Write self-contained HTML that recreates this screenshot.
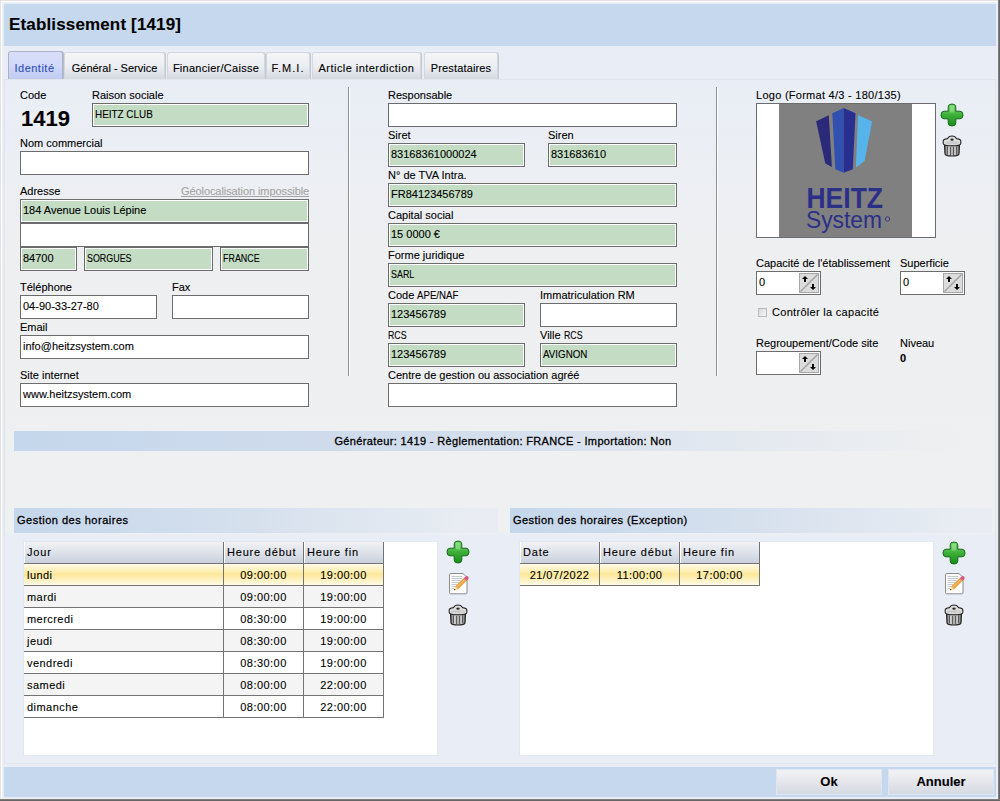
<!DOCTYPE html>
<html><head><meta charset="utf-8">
<style>
*{margin:0;padding:0;box-sizing:border-box}
html,body{width:1000px;height:801px;overflow:hidden}
body{background:#e9eef6;font-family:"Liberation Sans",sans-serif;font-size:11px;color:#000;position:relative;-webkit-text-stroke:0.1px currentColor}
.a{position:absolute}
.l{position:absolute;font-size:11px;line-height:13px;white-space:nowrap}
.in{position:absolute;height:24px;border:1px solid #6c6c6c;background:#fff;box-shadow:inset 0 0 0 1px #fff;padding-left:2px;line-height:21px;white-space:nowrap;overflow:hidden}
.g{background:#c3dcc3}
.tab{position:absolute;top:52px;height:27px;border:1px solid #d3d7df;border-bottom:none;border-radius:3px 3px 0 0;background:linear-gradient(#f5f5f7 0%,#eceef2 50%,#d5d9e1 100%);text-align:center;line-height:31px;white-space:nowrap;box-shadow:1px 0 0 #c4c8d0}
.th{position:absolute;top:542px;height:22px;border-right:1px solid #737373;border-bottom:1px solid #737373;background:linear-gradient(#f1f2f5,#cad1dd);box-shadow:inset 1px 0 0 #fff;padding-left:3px;line-height:21px;white-space:nowrap;letter-spacing:0.8px}
.td{position:absolute;height:22px;border-right:1px solid #737373;border-bottom:1px solid #737373;line-height:23px;padding:0 3px;white-space:nowrap;letter-spacing:0.45px}
.sel{background:linear-gradient(#fffbea,#fce89a 50%,#fffae6)}
.gr{background:#f4f4f4}
.wh{background:#fff}
</style></head><body>
<!-- frame -->
<div class="a" style="left:0;top:0;width:1000px;height:1px;background:#e4e1e2"></div>
<div class="a" style="left:0;top:0;width:1px;height:801px;background:#e4e1e2"></div>
<div class="a" style="left:1px;top:1px;width:997px;height:1px;background:#fff"></div>
<div class="a" style="left:1px;top:1px;width:1px;height:798px;background:#fff"></div>
<div class="a" style="left:998px;top:0;width:2px;height:801px;background:linear-gradient(90deg,#8a8a8a,#5a5a5a)"></div>
<div class="a" style="left:0;top:799px;width:1000px;height:2px;background:linear-gradient(#8a8a8a,#5a5a5a)"></div>
<!-- header -->
<div class="a" style="left:4px;top:4px;width:992px;height:42px;background:#c6d8ee"></div>
<div class="l" style="left:9px;top:15px;font-size:17px;line-height:20px;font-weight:bold;letter-spacing:0.15px">Etablissement [1419]</div>

<!-- tabs -->
<div class="tab" style="left:64px;width:101px">Général - Service</div>
<div class="tab" style="left:167px;width:98px;letter-spacing:0.27px">Financier/Caisse</div>
<div class="tab" style="left:266px;width:44px;letter-spacing:1px">F.M.I.</div>
<div class="tab" style="left:312px;width:109px;letter-spacing:0.45px">Article interdiction</div>
<div class="tab" style="left:424px;width:74px;letter-spacing:0.15px">Prestataires</div>
<!-- panel -->
<div class="a" style="left:4px;top:79px;width:992px;height:685px;background:linear-gradient(#e9eef6 0px,#eeeff1 171px,#eff0f1 450px,#e9eef6 456px);border:1px solid #e0e5ec"></div>
<div class="tab" style="left:8px;top:51px;width:55px;height:28px;border-color:#aab2c8;background:linear-gradient(#dadefb,#d2d8f8 50%,#bfcbf0);color:#2d4fb5;line-height:33px;letter-spacing:0.5px;padding-right:2px;box-shadow:1px 0 0 #b8bcc8">Identité</div>

<!-- BODY -->
<!-- left column -->
<div class="l" style="left:20px;top:89px">Code</div>
<div class="l" style="left:92px;top:89px">Raison sociale</div>
<div class="l" style="left:21px;top:107px;font-size:22px;line-height:24px;font-weight:bold">1419</div>
<div class="in g" style="left:92px;top:103px;width:217px"><span style="display:inline-block;transform:scaleX(0.9);transform-origin:0 50%">HEITZ CLUB</span></div>
<div class="l" style="left:20px;top:137px">Nom commercial</div>
<div class="in" style="left:20px;top:151px;width:289px"></div>
<div class="l" style="left:20px;top:185px">Adresse</div>
<div class="l" style="left:181px;top:185px;color:#a3a3a3;text-decoration:underline;letter-spacing:-0.08px">Géolocalisation impossible</div>
<div class="in g" style="left:20px;top:199px;width:289px">184 Avenue Louis Lépine</div>
<div class="in" style="left:20px;top:223px;width:289px"></div>
<div class="in g" style="left:20px;top:247px;width:57px">84700</div>
<div class="in g" style="left:84px;top:247px;width:129px"><span style="display:inline-block;transform:scaleX(0.81);transform-origin:0 50%">SORGUES</span></div>
<div class="in g" style="left:220px;top:247px;width:89px"><span style="display:inline-block;transform:scaleX(0.81);transform-origin:0 50%">FRANCE</span></div>
<div class="l" style="left:20px;top:281px">Téléphone</div>
<div class="l" style="left:172px;top:281px">Fax</div>
<div class="in" style="left:20px;top:295px;width:137px">04-90-33-27-80</div>
<div class="in" style="left:172px;top:295px;width:137px"></div>
<div class="l" style="left:20px;top:321px">Email</div>
<div class="in" style="left:20px;top:335px;width:289px">info@heitzsystem.com</div>
<div class="l" style="left:20px;top:369px">Site internet</div>
<div class="in" style="left:20px;top:383px;width:289px">www.heitzsystem.com</div>

<div class="a" style="left:348px;top:87px;width:1px;height:289px;background:#8c9096;box-shadow:1px 0 0 #fff"></div>
<div class="a" style="left:716px;top:87px;width:1px;height:289px;background:#8c9096;box-shadow:1px 0 0 #fff"></div>

<!-- middle column -->
<div class="l" style="left:388px;top:89px">Responsable</div>
<div class="in" style="left:388px;top:103px;width:289px"></div>
<div class="l" style="left:388px;top:129px">Siret</div>
<div class="l" style="left:548px;top:129px">Siren</div>
<div class="in g" style="left:388px;top:143px;width:137px">83168361000024</div>
<div class="in g" style="left:548px;top:143px;width:129px">831683610</div>
<div class="l" style="left:388px;top:169px">N° de TVA Intra.</div>
<div class="in g" style="left:388px;top:183px;width:289px">FR84123456789</div>
<div class="l" style="left:388px;top:209px">Capital social</div>
<div class="in g" style="left:388px;top:223px;width:289px">15 0000 €</div>
<div class="l" style="left:388px;top:249px">Forme juridique</div>
<div class="in g" style="left:388px;top:263px;width:289px"><span style="display:inline-block;transform:scaleX(0.81);transform-origin:0 50%">SARL</span></div>
<div class="l" style="left:388px;top:289px">Code <span style="display:inline-block;transform:scaleX(0.88);transform-origin:0 50%">APE/NAF</span></div>
<div class="l" style="left:540px;top:289px">Immatriculation RM</div>
<div class="in g" style="left:388px;top:303px;width:137px">123456789</div>
<div class="in" style="left:540px;top:303px;width:137px"></div>
<div class="l" style="left:388px;top:329px"><span style="display:inline-block;transform:scaleX(0.8);transform-origin:0 50%">RCS</span></div>
<div class="l" style="left:540px;top:329px">Ville <span style="display:inline-block;transform:scaleX(0.8);transform-origin:0 50%">RCS</span></div>
<div class="in g" style="left:388px;top:343px;width:137px">123456789</div>
<div class="in g" style="left:540px;top:343px;width:137px"><span style="display:inline-block;transform:scaleX(0.89);transform-origin:0 50%">AVIGNON</span></div>
<div class="l" style="left:388px;top:369px">Centre de gestion ou association agréé</div>
<div class="in" style="left:388px;top:383px;width:289px"></div>

<!-- right column -->
<div class="l" style="left:756px;top:89px;letter-spacing:0.27px">Logo (Format 4/3 - 180/135)</div>
<div class="a" style="left:756px;top:103px;width:180px;height:135px;border:1px solid #6c6c6c;background:#fff"></div>
<div class="l" style="left:756px;top:257px">Capacité de l'établissement</div>
<div class="l" style="left:900px;top:257px">Superficie</div>
<div class="in" style="left:756px;top:271px;width:65px">0</div>
<div class="in" style="left:900px;top:271px;width:65px">0</div>
<div class="a" style="left:758px;top:308px;width:9px;height:9px;border:1px solid #b9b9b9;background:linear-gradient(135deg,#d9d9d9,#f6f6f6)"></div>
<div class="l" style="left:772px;top:306px;letter-spacing:0.3px">Contrôler la capacité</div>
<div class="l" style="left:756px;top:337px">Regroupement/Code site</div>
<div class="l" style="left:900px;top:337px">Niveau</div>
<div class="in" style="left:756px;top:351px;width:65px"></div>
<div class="l" style="left:900px;top:352px;font-weight:bold">0</div>

<!-- generator band -->
<div class="a" style="left:14px;top:431px;width:978px;height:20px;background:linear-gradient(90deg,#c5d7ec,#d3ddec 45%,#e4e9f0 75%,#eff0f1 98%);text-align:center;line-height:20px;-webkit-text-stroke:0.3px;letter-spacing:0.36px">Générateur: 1419 - Règlementation: FRANCE - Importation: Non</div>

<!-- gestion bands -->
<div class="a" style="left:14px;top:508px;width:484px;height:25px;background:linear-gradient(90deg,#c5d7ec,#d6e0ed 50%,#e9edf3 96%);padding-left:3px;line-height:25px;-webkit-text-stroke:0.3px;letter-spacing:0.5px">Gestion des horaires</div>
<div class="a" style="left:510px;top:508px;width:482px;height:25px;background:linear-gradient(90deg,#c5d7ec,#d6e0ed 50%,#e9edf3 96%);padding-left:3px;line-height:25px;-webkit-text-stroke:0.3px;letter-spacing:0.45px">Gestion des horaires (Exception)</div>

<div class="a" style="left:23px;top:541px;width:415px;height:215px;background:#fff;border:1px solid #e3e8ef"></div>
<div class="a" style="left:519px;top:541px;width:415px;height:215px;background:#fff;border:1px solid #e3e8ef"></div>
<div class="th" style="left:24px;width:200px">Jour</div>
<div class="th" style="left:224px;width:80px">Heure début</div>
<div class="th" style="left:304px;width:80px">Heure fin</div>
<div class="td sel" style="left:24px;top:564px;width:200px;text-align:left">lundi</div>
<div class="td sel" style="left:224px;top:564px;width:80px;text-align:center">09:00:00</div>
<div class="td sel" style="left:304px;top:564px;width:80px;text-align:center">19:00:00</div>
<div class="td gr" style="left:24px;top:586px;width:200px;text-align:left">mardi</div>
<div class="td gr" style="left:224px;top:586px;width:80px;text-align:center">09:00:00</div>
<div class="td gr" style="left:304px;top:586px;width:80px;text-align:center">19:00:00</div>
<div class="td wh" style="left:24px;top:608px;width:200px;text-align:left">mercredi</div>
<div class="td wh" style="left:224px;top:608px;width:80px;text-align:center">08:30:00</div>
<div class="td wh" style="left:304px;top:608px;width:80px;text-align:center">19:00:00</div>
<div class="td gr" style="left:24px;top:630px;width:200px;text-align:left">jeudi</div>
<div class="td gr" style="left:224px;top:630px;width:80px;text-align:center">08:30:00</div>
<div class="td gr" style="left:304px;top:630px;width:80px;text-align:center">19:00:00</div>
<div class="td wh" style="left:24px;top:652px;width:200px;text-align:left">vendredi</div>
<div class="td wh" style="left:224px;top:652px;width:80px;text-align:center">08:30:00</div>
<div class="td wh" style="left:304px;top:652px;width:80px;text-align:center">19:00:00</div>
<div class="td gr" style="left:24px;top:674px;width:200px;text-align:left">samedi</div>
<div class="td gr" style="left:224px;top:674px;width:80px;text-align:center">08:00:00</div>
<div class="td gr" style="left:304px;top:674px;width:80px;text-align:center">22:00:00</div>
<div class="td wh" style="left:24px;top:696px;width:200px;text-align:left">dimanche</div>
<div class="td wh" style="left:224px;top:696px;width:80px;text-align:center">08:00:00</div>
<div class="td wh" style="left:304px;top:696px;width:80px;text-align:center">22:00:00</div>
<div class="th" style="left:520px;width:80px">Date</div>
<div class="th" style="left:600px;width:80px">Heure début</div>
<div class="th" style="left:680px;width:80px">Heure fin</div>
<div class="td sel" style="left:520px;top:564px;width:80px;text-align:center">21/07/2022</div>
<div class="td sel" style="left:600px;top:564px;width:80px;text-align:center">11:00:00</div>
<div class="td sel" style="left:680px;top:564px;width:80px;text-align:center">17:00:00</div>

<svg class="a" style="left:940px;top:103px" width="24" height="24" viewBox="0 0 24 24"><defs><linearGradient id="pg940" x1="0" y1="0" x2="0" y2="1"><stop offset="0" stop-color="#7ed878"/><stop offset="0.5" stop-color="#3eb03a"/><stop offset="1" stop-color="#178c17"/></linearGradient></defs><path d="M8.2,4 Q8.2,1 12,1 Q15.8,1 15.8,4 L15.8,8.2 L20,8.2 Q23,8.2 23,12 Q23,15.8 20,15.8 L15.8,15.8 L15.8,20 Q15.8,23 12,23 Q8.2,23 8.2,20 L8.2,15.8 L4,15.8 Q1,15.8 1,12 Q1,8.2 4,8.2 L8.2,8.2 Z" fill="url(#pg940)" stroke="#15691a" stroke-width="1"/><path d="M10,3 L14,3 L14,9.5 L10,9.5 Z" fill="#a6ea9e" opacity="0.5"/></svg>
<svg class="a" style="left:942px;top:135px" width="20" height="22" viewBox="0 0 20 22"><defs><linearGradient id="tb942" x1="0" y1="0" x2="1" y2="0"><stop offset="0" stop-color="#5e5e5e"/><stop offset="0.25" stop-color="#cfcfcf"/><stop offset="0.5" stop-color="#b0b0b0"/><stop offset="0.75" stop-color="#c4c4c4"/><stop offset="1" stop-color="#5a5a5a"/></linearGradient></defs><path d="M2.5,10 L17.5,10 L17,19 Q16.5,21 10,21 Q3.5,21 3,19 Z" fill="url(#tb942)" stroke="#222" stroke-width="1.1"/><path d="M5.5,11.5 V19.5 M8.5,12 V20 M11.5,12 V20 M14.5,11.5 V19.5" stroke="#5c5c5c" stroke-width="1"/><path d="M1.2,8.5 L1.2,6 Q1.2,4.2 5.5,3.6 Q6.8,1 10,1 Q13.2,1 14.5,3.6 Q18.8,4.2 18.8,6 L18.8,8.5 Q18.8,10.8 10,10.8 Q1.2,10.8 1.2,8.5 Z" fill="#dedede" stroke="#222" stroke-width="1.1"/><path d="M3,7 Q10,5 17,7 L17,8.6 Q10,10 3,8.6 Z" fill="#c4c4c4" opacity="0.7"/><ellipse cx="10" cy="4.6" rx="1.7" ry="1.2" fill="#2a2a2a"/></svg>
<svg class="a" style="left:779px;top:104px;-webkit-text-stroke:0" width="133" height="133" viewBox="0 0 133 133"><rect width="133" height="133" fill="#808080"/><path d="M37.1,17.2 L49.8,11.3 L52.9,63.1 L46.3,59.6 Z" fill="#2b2a78"/><path d="M53.3,9.3 L64.7,4.1 L64.7,68.7 L56.3,65.2 Z" fill="#3150b0"/><path d="M64.7,4.1 L76.5,9.3 L73.8,65.2 L64.7,68.7 Z" fill="#292f90"/><path d="M79.1,11.1 L93.1,17.6 L85.6,56.9 L76.9,63.5 Z" fill="#56b4ea"/><text x="27.5" y="104" font-family="Liberation Sans" font-weight="bold" font-size="30" fill="#2b2f88" textLength="76.5" lengthAdjust="spacingAndGlyphs">HEITZ</text><text x="27" y="124" font-family="Liberation Sans" font-size="23.5" fill="#2b2f88" textLength="76" lengthAdjust="spacingAndGlyphs">System</text><circle cx="108.5" cy="115" r="2.2" fill="none" stroke="#2b2f88" stroke-width="0.8"/></svg>
<svg class="a" style="left:799px;top:273px" width="20" height="20" viewBox="0 0 20 20"><rect x="0.5" y="0.5" width="19" height="19" fill="#dcdcdc" stroke="#a6a6a6"/><path d="M1.5,18.5 L18.5,1.5" stroke="#a2a2a2" stroke-width="1.4"/><path d="M5,9 L5,6 L3,6 L6,3 L9,6 L7,6 L7,9 Z" fill="#000"/><path d="M13,11 L15,11 L15,14 L17,14 L14,17 L11,14 L13,14 Z" fill="#000"/></svg>
<svg class="a" style="left:943px;top:273px" width="20" height="20" viewBox="0 0 20 20"><rect x="0.5" y="0.5" width="19" height="19" fill="#dcdcdc" stroke="#a6a6a6"/><path d="M1.5,18.5 L18.5,1.5" stroke="#a2a2a2" stroke-width="1.4"/><path d="M5,9 L5,6 L3,6 L6,3 L9,6 L7,6 L7,9 Z" fill="#000"/><path d="M13,11 L15,11 L15,14 L17,14 L14,17 L11,14 L13,14 Z" fill="#000"/></svg>
<svg class="a" style="left:799px;top:353px" width="20" height="20" viewBox="0 0 20 20"><rect x="0.5" y="0.5" width="19" height="19" fill="#dcdcdc" stroke="#a6a6a6"/><path d="M1.5,18.5 L18.5,1.5" stroke="#a2a2a2" stroke-width="1.4"/><path d="M5,9 L5,6 L3,6 L6,3 L9,6 L7,6 L7,9 Z" fill="#000"/><path d="M13,11 L15,11 L15,14 L17,14 L14,17 L11,14 L13,14 Z" fill="#000"/></svg>
<svg class="a" style="left:446px;top:540px" width="24" height="24" viewBox="0 0 24 24"><defs><linearGradient id="pg446" x1="0" y1="0" x2="0" y2="1"><stop offset="0" stop-color="#7ed878"/><stop offset="0.5" stop-color="#3eb03a"/><stop offset="1" stop-color="#178c17"/></linearGradient></defs><path d="M8.2,4 Q8.2,1 12,1 Q15.8,1 15.8,4 L15.8,8.2 L20,8.2 Q23,8.2 23,12 Q23,15.8 20,15.8 L15.8,15.8 L15.8,20 Q15.8,23 12,23 Q8.2,23 8.2,20 L8.2,15.8 L4,15.8 Q1,15.8 1,12 Q1,8.2 4,8.2 L8.2,8.2 Z" fill="url(#pg446)" stroke="#15691a" stroke-width="1"/><path d="M10,3 L14,3 L14,9.5 L10,9.5 Z" fill="#a6ea9e" opacity="0.5"/></svg>
<svg class="a" style="left:447px;top:572px" width="23" height="23" viewBox="0 0 23 23"><path d="M2.5,2.8 Q2.5,1.5 3.8,1.5 L16,1.5 L20,5.2 L20,20.5 Q20,21.8 18.7,21.8 L3.8,21.8 Q2.5,21.8 2.5,20.5 Z" fill="#fcfcfc" stroke="#8c8c8c" stroke-width="1"/><path d="M4.5,4.5 H15 M4.5,6.5 H15 M4.5,8.5 H14 M4.5,10.5 H12 M4.5,12.5 H10 M4.5,14.5 H8 M4.5,16.5 H7" stroke="#c2cad4" stroke-width="1"/><path d="M10.85,17.43 L8.05,14.57 L16.6,6.17 L19.4,9.03 Z" fill="#f0a03c"/><path d="M9.45,16 L17.6,7.6" stroke="#f8c878" stroke-width="0.9"/><path d="M16.6,6.17 L19.4,9.03 L21.4,7.1 Q22.3,6 21.2,4.8 Q20.1,3.7 18.9,4.3 Z" fill="#d65a78"/><path d="M7.3,18.1 L10.85,17.43 L8.05,14.57 Z" fill="#f3dcaa"/><path d="M7.1,18.3 L8.6,17.9 L7.6,16.8 Z" fill="#111"/></svg>
<svg class="a" style="left:448px;top:604px" width="20" height="22" viewBox="0 0 20 22"><defs><linearGradient id="tb448" x1="0" y1="0" x2="1" y2="0"><stop offset="0" stop-color="#5e5e5e"/><stop offset="0.25" stop-color="#cfcfcf"/><stop offset="0.5" stop-color="#b0b0b0"/><stop offset="0.75" stop-color="#c4c4c4"/><stop offset="1" stop-color="#5a5a5a"/></linearGradient></defs><path d="M2.5,10 L17.5,10 L17,19 Q16.5,21 10,21 Q3.5,21 3,19 Z" fill="url(#tb448)" stroke="#222" stroke-width="1.1"/><path d="M5.5,11.5 V19.5 M8.5,12 V20 M11.5,12 V20 M14.5,11.5 V19.5" stroke="#5c5c5c" stroke-width="1"/><path d="M1.2,8.5 L1.2,6 Q1.2,4.2 5.5,3.6 Q6.8,1 10,1 Q13.2,1 14.5,3.6 Q18.8,4.2 18.8,6 L18.8,8.5 Q18.8,10.8 10,10.8 Q1.2,10.8 1.2,8.5 Z" fill="#dedede" stroke="#222" stroke-width="1.1"/><path d="M3,7 Q10,5 17,7 L17,8.6 Q10,10 3,8.6 Z" fill="#c4c4c4" opacity="0.7"/><ellipse cx="10" cy="4.6" rx="1.7" ry="1.2" fill="#2a2a2a"/></svg>
<svg class="a" style="left:942px;top:541px" width="24" height="24" viewBox="0 0 24 24"><defs><linearGradient id="pg942" x1="0" y1="0" x2="0" y2="1"><stop offset="0" stop-color="#7ed878"/><stop offset="0.5" stop-color="#3eb03a"/><stop offset="1" stop-color="#178c17"/></linearGradient></defs><path d="M8.2,4 Q8.2,1 12,1 Q15.8,1 15.8,4 L15.8,8.2 L20,8.2 Q23,8.2 23,12 Q23,15.8 20,15.8 L15.8,15.8 L15.8,20 Q15.8,23 12,23 Q8.2,23 8.2,20 L8.2,15.8 L4,15.8 Q1,15.8 1,12 Q1,8.2 4,8.2 L8.2,8.2 Z" fill="url(#pg942)" stroke="#15691a" stroke-width="1"/><path d="M10,3 L14,3 L14,9.5 L10,9.5 Z" fill="#a6ea9e" opacity="0.5"/></svg>
<svg class="a" style="left:943px;top:572px" width="23" height="23" viewBox="0 0 23 23"><path d="M2.5,2.8 Q2.5,1.5 3.8,1.5 L16,1.5 L20,5.2 L20,20.5 Q20,21.8 18.7,21.8 L3.8,21.8 Q2.5,21.8 2.5,20.5 Z" fill="#fcfcfc" stroke="#8c8c8c" stroke-width="1"/><path d="M4.5,4.5 H15 M4.5,6.5 H15 M4.5,8.5 H14 M4.5,10.5 H12 M4.5,12.5 H10 M4.5,14.5 H8 M4.5,16.5 H7" stroke="#c2cad4" stroke-width="1"/><path d="M10.85,17.43 L8.05,14.57 L16.6,6.17 L19.4,9.03 Z" fill="#f0a03c"/><path d="M9.45,16 L17.6,7.6" stroke="#f8c878" stroke-width="0.9"/><path d="M16.6,6.17 L19.4,9.03 L21.4,7.1 Q22.3,6 21.2,4.8 Q20.1,3.7 18.9,4.3 Z" fill="#d65a78"/><path d="M7.3,18.1 L10.85,17.43 L8.05,14.57 Z" fill="#f3dcaa"/><path d="M7.1,18.3 L8.6,17.9 L7.6,16.8 Z" fill="#111"/></svg>
<svg class="a" style="left:944px;top:604px" width="20" height="22" viewBox="0 0 20 22"><defs><linearGradient id="tb944" x1="0" y1="0" x2="1" y2="0"><stop offset="0" stop-color="#5e5e5e"/><stop offset="0.25" stop-color="#cfcfcf"/><stop offset="0.5" stop-color="#b0b0b0"/><stop offset="0.75" stop-color="#c4c4c4"/><stop offset="1" stop-color="#5a5a5a"/></linearGradient></defs><path d="M2.5,10 L17.5,10 L17,19 Q16.5,21 10,21 Q3.5,21 3,19 Z" fill="url(#tb944)" stroke="#222" stroke-width="1.1"/><path d="M5.5,11.5 V19.5 M8.5,12 V20 M11.5,12 V20 M14.5,11.5 V19.5" stroke="#5c5c5c" stroke-width="1"/><path d="M1.2,8.5 L1.2,6 Q1.2,4.2 5.5,3.6 Q6.8,1 10,1 Q13.2,1 14.5,3.6 Q18.8,4.2 18.8,6 L18.8,8.5 Q18.8,10.8 10,10.8 Q1.2,10.8 1.2,8.5 Z" fill="#dedede" stroke="#222" stroke-width="1.1"/><path d="M3,7 Q10,5 17,7 L17,8.6 Q10,10 3,8.6 Z" fill="#c4c4c4" opacity="0.7"/><ellipse cx="10" cy="4.6" rx="1.7" ry="1.2" fill="#2a2a2a"/></svg>
<!-- footer -->
<div class="a" style="left:4px;top:767px;width:992px;height:30px;background:#c6d8ee"></div>
<div class="a" style="left:776px;top:769px;width:106px;height:26px;border:1px solid #dde6f2;background:linear-gradient(#f3f3f5,#d5d9e1);text-align:center;line-height:24px;font-weight:bold;font-size:13px">Ok</div>
<div class="a" style="left:888px;top:769px;width:106px;height:26px;border:1px solid #dde6f2;background:linear-gradient(#f3f3f5,#d5d9e1);text-align:center;line-height:24px;font-weight:bold;font-size:13px">Annuler</div>
</body></html>
